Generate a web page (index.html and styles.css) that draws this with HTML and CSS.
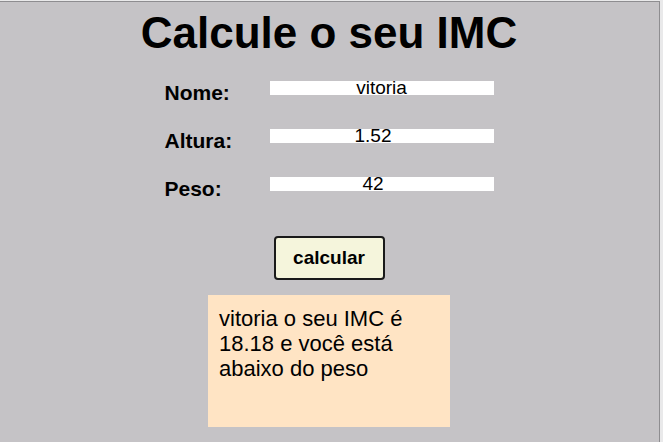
FILE: index.html
```html
<!DOCTYPE html>
<html lang="pt">
<head>
<meta charset="utf-8">
<title>Calcule o seu IMC</title>
<link rel="stylesheet" href="styles.css">
</head>
<body>
<div class="window">
  <h1 class="title">Calcule o seu IMC</h1>
  <div class="form">
    <div class="row">
      <span class="label">Nome:</span>
      <div class="field">vitoria</div>
    </div>
    <div class="row">
      <span class="label">Altura:</span>
      <div class="field number">1.52</div>
    </div>
    <div class="row">
      <span class="label">Peso:</span>
      <div class="field number">42</div>
    </div>
  </div>
  <div class="actions">
    <button class="btn" type="button">calcular</button>
  </div>
  <div class="result">vitoria o seu IMC é 18.18 e você está abaixo do peso</div>
</div>
</body>
</html>
```

FILE: styles.css
```css
html, body {
  margin: 0;
  padding: 0;
  background: #e9e9ea;
}
body {
  font-family: "Liberation Sans", Arial, sans-serif;
  color: #000;
}
.window {
  box-sizing: border-box;
  margin-top: 1px;
  width: 660px;
  height: 441px;
  background: #c5c3c6;
  border-top: 1px solid #8e8d90;
  border-right: 1px solid #8e8d90;
  padding-top: 5px;
  padding-right: 1px;
  overflow: hidden;
}
.title {
  margin: 0 0 23px;
  font-size: 44px;
  font-weight: bold;
  text-align: center;
  line-height: 51px;
}
.form {
  display: grid;
  grid-template-columns: 105px 224px;
  row-gap: 24px;
  width: 329px;
  margin: 0 auto;
}
.row {
  display: contents;
}
.label {
  font-size: 21px;
  font-weight: bold;
  line-height: 24px;
}
.field {
  align-self: start;
  box-sizing: border-box;
  height: 14px;
  background: #fff;
  font-size: 19px;
  line-height: 14px;
  text-align: center;
  white-space: nowrap;
}
.field.number {
  padding-right: 17px;
}
.actions {
  display: flex;
  justify-content: center;
  margin-top: 35px;
}
.btn {
  box-sizing: border-box;
  width: 111px;
  height: 44px;
  margin: 0;
  padding: 0;
  background: #f5f5dc;
  border: 2px solid #1a1a1a;
  border-radius: 4px;
  font-family: "Liberation Sans", Arial, sans-serif;
  font-size: 19px;
  font-weight: bold;
  color: #000;
}
.result {
  box-sizing: border-box;
  width: 242px;
  height: 132px;
  margin: 15px auto 0;
  padding: 11px 11px;
  background: #ffe4c4;
  font-size: 22px;
  line-height: 25px;
}
```
